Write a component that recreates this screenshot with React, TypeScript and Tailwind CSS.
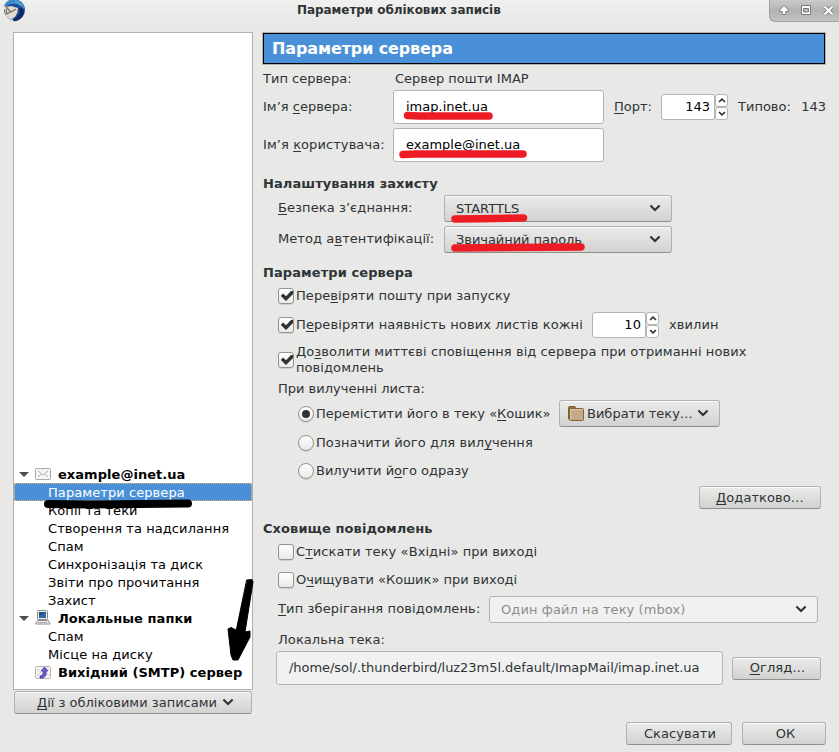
import type { ReactNode } from "react";
import clsx from "clsx";

const BUTTON =
  "flex items-center rounded-[3px] border border-[#b1b1ad] border-b-[#8f8f8b] bg-gradient-to-b from-[#ebebea] to-[#d2d2d0] shadow-[inset_0_1px_0_#fbfbfb]";
const FIELD = "flex items-center rounded-[3px] border border-[#b4b4b0] bg-white text-black";

/** Underlined access key inside a label. */
function Key({ children }: { children: string }) {
  return <span className="underline decoration-1 underline-offset-2 [text-decoration-skip-ink:none]">{children}</span>;
}

function Chevron({ className }: { className?: string }) {
  return (
    <svg className={clsx("h-[8px] w-[12px] shrink-0", className)} viewBox="0 0 12 8" fill="none">
      <path d="M1.400 1.500 6 6l4.600-4.500" stroke="#2e3436" strokeWidth="2.1" />
    </svg>
  );
}

function Label({ children, className }: { children: ReactNode; className?: string }) {
  return <span className={clsx("whitespace-nowrap", className)}>{children}</span>;
}

function Heading({ children, className }: { children: ReactNode; className?: string }) {
  return <h2 className={clsx("h-4 whitespace-nowrap font-bold leading-4", className)}>{children}</h2>;
}

function Select({ children, className }: { children: ReactNode; className?: string }) {
  return (
    <div className={clsx(BUTTON, "h-[27px] justify-between pl-[11px] pr-[10px]", className)}>
      <Label>{children}</Label>
      <Chevron className="mb-[2px]" />
    </div>
  );
}

function Spin({ value, className }: { value: number; className?: string }) {
  return (
    <div className={clsx("flex h-[26px]", className)}>
      <div className={clsx(FIELD, "grow justify-end rounded-r-[2px] pr-[4px]")}>{value}</div>
      <div className="flex w-[13px] flex-col">
        {["M1 4 4 1.2 7 4", "M1 1 4 3.8 7 1"].map((d) => (
          <div key={d} className={clsx(FIELD, "h-[13px] justify-center")}>
            <svg className="h-[5px] w-[8px]" viewBox="0 0 8 5" fill="none">
              <path d={d} stroke="#2e3436" strokeWidth="1.7" />
            </svg>
          </div>
        ))}
      </div>
    </div>
  );
}

function Check({ checked = false }: { checked?: boolean }) {
  return (
    <span className="flex h-4 w-4 shrink-0 items-center justify-center rounded-[3px] border border-[#92928e] bg-gradient-to-b from-white to-[#e9e9e8] shadow-[0_1px_0_#d0d0ce]">
      {checked && (
        <svg className="h-[14px] w-[14px] shrink-0" viewBox="0 0 14 14">
          <path d="M1.800 7 4 4.600l3 2.700L12 2h2v3L7 12z" fill="#2e3436" />
        </svg>
      )}
    </span>
  );
}

function Radio({ checked = false }: { checked?: boolean }) {
  return (
    <span className="flex h-4 w-4 shrink-0 items-center justify-center rounded-full border border-[#92928e] bg-gradient-to-b from-white to-[#e9e9e8] shadow-[0_1px_0_#d0d0ce]">
      {checked && <span className="h-2 w-2 rounded-full bg-[#2e3436]" />}
    </span>
  );
}

function Thunderbird() {
  return (
    <svg className="h-[22px] w-[22px]" viewBox="0 0 22 22">
      <circle cx="11.500" cy="10" r="10.500" fill="#1c4f96" />
      <path d="M1 6C3 0 9-2 15 0c4 2 6 5 6 9-3-4-8-6-12-5-3 0-6 1-8 4z" fill="#3b8cc6" />
      <path d="M12 0c5 1 8 4 9 9-2-3-5-5-9-6z" fill="#559fce" />
      <path d="M16 8c2 4 0 8-5 11l-1 2c6 1 11-4 11-10-1-3-3-4-5-3z" fill="#12276a" />
      <path d="M0 6q5 1 8 0l7 2q0 5-3 9l-4 2-5-2-1-6z" fill="#e3dbd0" />
      <path d="m3 7 5 5 5-3M3 9l1 5 3-2" fill="none" stroke="#75665c" strokeWidth="1.1" />
      <path d="M4 16c2 3 4 4 6 4l-1-3z" fill="#d5d6d8" />
    </svg>
  );
}

function TitleBar() {
  return (
    <header className="flex h-[22px] w-full shrink-0 bg-gradient-to-b from-[#f0f0f0] to-[#e8e8e6]">
      <div className="w-[40px] shrink-0 pl-[3px]">
        <Thunderbird />
      </div>
      <h1 className="grow pl-[257px] text-[12px] font-bold leading-[20px] tracking-[-0.06px]">
        Параметри облікових записів
      </h1>
      <div className="flex h-[22px] w-[70px] shrink-0 items-center gap-[12px] rounded-bl-[6px] border-b border-l border-[#a2a2a0] bg-gradient-to-b from-[#cacac9] via-[#b3b3b1] to-[#c2c2c0] pb-[1px] pl-[9px]">
        <svg className="h-[10px] w-[10px] shrink-0" viewBox="0 0 10 10">
          <path d="M5 .500.500 5v1.300h2.700v3.200h3.600V6.300h2.700V5z" fill="#fff" stroke="#777" strokeWidth=".9" />
        </svg>
        <svg className="h-[10px] w-[10px] shrink-0" viewBox="0 0 10 10">
          <path d="M.5.5h9v9h-9z" fill="#fff" stroke="#777" />
          <path d="M2.5 3.5h5v3.500h-5z" fill="#b9b9b8" stroke="#777" />
        </svg>
        <svg className="h-[11px] w-[11px] shrink-0" viewBox="0 0 11 11">
          <path d="m1.500 1.500 8 8m0-8-8 8" stroke="#777" strokeWidth="3.800" />
          <path d="m1.500 1.500 8 8m0-8-8 8" stroke="#fff" strokeWidth="2.200" />
        </svg>
      </div>
    </header>
  );
}

function MailIcon() {
  return (
    <svg className="h-[12px] w-[16px]" viewBox="0 0 16 12" fill="none">
      <rect x=".5" y=".5" width="15" height="11" rx="1" fill="#f5f5f5" stroke="#a7a7a7" />
      <path d="m3 3 5 4 5-4M3 9l3-3m7 3-3-3" stroke="#b0b0b0" />
    </svg>
  );
}

function ComputerIcon() {
  return (
    <svg className="h-[16px] w-[16px]" viewBox="0 0 16 16">
      <rect x="2.5" y=".5" width="10" height="9" rx="1" fill="#eee" stroke="#8b8b87" />
      <path d="M4 2h7v6H4z" fill="#3465a4" />
      <path d="M4 2h7L4 6z" fill="#204a87" />
      <path d="M2.500 10.500h11l1.500 3.500H.5z" fill="#f3f3f2" stroke="#8b8b87" />
      <path d="M3 12.500h9" stroke="#aaa" />
    </svg>
  );
}

function OutgoingIcon() {
  return (
    <svg className="h-[13px] w-[16px]" viewBox="0 0 16 13">
      <rect x=".5" y=".5" width="15" height="12" rx="1" fill="#f5f5f5" stroke="#b5b5b5" />
      <path d="m2 3 4 3-4 4m12-7-3 3 3 4" fill="none" stroke="#ccc" />
      <path d="M9.500 1 6 5h2v3.500L5 10v2h3l3-2.500V5h2z" fill="#7158cf" stroke="#4327a0" strokeWidth=".7" />
    </svg>
  );
}

type Row = { text: string; icon?: ReactNode; open?: boolean; selected?: boolean };

const ROWS: Row[] = [
  { text: "example@inet.ua", icon: <MailIcon />, open: true },
  { text: "Параметри сервера", selected: true },
  { text: "Копії та теки" },
  { text: "Створення та надсилання" },
  { text: "Спам" },
  { text: "Синхронізація та диск" },
  { text: "Звіти про прочитання" },
  { text: "Захист" },
  { text: "Локальные папки", icon: <ComputerIcon />, open: true },
  { text: "Спам" },
  { text: "Місце на диску" },
  { text: "Вихідний (SMTP) сервер", icon: <OutgoingIcon /> },
];

function TreeRow({ text, icon, open, selected }: Row) {
  if (!icon) {
    return (
      <li
        className={clsx(
          "flex h-[18px] items-center whitespace-nowrap pl-[34px] pt-[2px]",
          selected && "bg-[#4a90d9] text-white outline-1 -outline-offset-1 outline-dotted outline-[#e0bd70]",
        )}
      >
        {text}
      </li>
    );
  }
  return (
    <li className="flex h-[18px] items-center whitespace-nowrap font-bold tracking-[0.04px]">
      <span className="flex w-[21px] shrink-0 pl-[5px]">
        {open && (
          <svg className="h-[5px] w-[10px]" viewBox="0 0 10 5">
            <path d="M0 0h10L5 5z" fill="#4c4c4c" />
          </svg>
        )}
      </span>
      <span className="w-[23px] shrink-0">{icon}</span>
      <span className="pt-[2px]">{text}</span>
    </li>
  );
}

function Sidebar() {
  return (
    <aside className="w-[240px] shrink-0">
      <ul className="flex h-[658px] flex-col justify-end border border-[#b0b0ae] bg-white pb-[8px] text-black">
        {ROWS.map((row, i) => (
          <TreeRow key={i} {...row} />
        ))}
      </ul>
      <div className={clsx(BUTTON, "mx-[1px] mt-[1px] h-[23px] gap-[5px] pl-[22px]")}>
        <Label className="tracking-normal">
          <Key>Д</Key>ії з обліковими записами
        </Label>
        <Chevron className="mb-[2px]" />
      </div>
    </aside>
  );
}

function FolderIcon() {
  return (
    <svg className="h-[15px] w-[16px] shrink-0" viewBox="0 0 16 15">
      <path d="M.5 13V1.500q0-1 1-1h5q1 0 1 1V3H15v10z" fill="#8f7048" stroke="#7d5a2a" />
      <rect x="1.500" y="2.500" width="14" height="12" rx="1" fill="#c1ab8c" stroke="#8a6126" />
      <path d="M2.500 13.500v-10h12" fill="none" stroke="#d8c8b0" />
    </svg>
  );
}

function ServerSettings() {
  return (
    <main className="ml-[10px] w-[563px] shrink-0">
      <div className="mb-[1px] mt-[1px] flex h-[31px] w-[562px] items-center border border-black bg-[#4a90d9] pl-[8px] text-[16px] font-bold tracking-[-0.12px] text-white shadow-[0_0_0_1px_#b5b2ab]">
        Параметри сервера
      </div>
      <div className="flex h-[25px] items-center pt-[2px] tracking-normal">
        <Label className="w-[132px]">Тип сервера:</Label>
        <Label>Сервер пошти IMAP</Label>
      </div>
      <div className="flex h-[34px] items-center tracking-normal">
        <Label className="w-[130px] shrink-0">
          Ім’я <Key>с</Key>ервера:
        </Label>
        <div className={clsx(FIELD, "h-[34px] w-[211px] shrink-0 pl-[12px]")}>imap.inet.ua</div>
        <Label className="ml-[10px] w-[47px] shrink-0">
          <Key>П</Key>орт:
        </Label>
        <Spin value={143} className="w-[67px] shrink-0 leading-[18px]" />
        <Label className="ml-[10px]">Типово:</Label>
        <Label className="ml-auto">143</Label>
      </div>
      <div className="mt-[4px] flex h-[34px] items-center">
        <Label className="w-[130px] shrink-0">
          Ім’я <Key>к</Key>ористувача:
        </Label>
        <div className={clsx(FIELD, "h-[34px] w-[211px] pl-[12px] tracking-normal")}>example@inet.ua</div>
      </div>

      <Heading className="mt-[14px]">Налаштування захисту</Heading>
      <div className="mt-[3px] flex h-[27px] items-center pl-[15px]">
        <Label className="w-[166px] shrink-0 pb-[1px]">
          <Key>Б</Key>езпека з’єднання:
        </Label>
        <Select className="w-[228px] tracking-normal">STARTTLS</Select>
      </div>
      <div className="mt-[4px] flex h-[27px] items-center pl-[15px]">
        <Label className="w-[166px] shrink-0 pb-[1px]">
          Метод а<Key>в</Key>тентифікації:
        </Label>
        <Select className="w-[228px] tracking-[-0.05px]">Звичайний пароль</Select>
      </div>

      <Heading className="mt-[12px]">Параметри сервера</Heading>
      <div className="pl-[15px]">
        <div className="mt-[7px] flex h-4 items-center gap-[2px]">
          <Check checked />
          <Label>
            Пере<Key>в</Key>іряти пошту при запуску
          </Label>
        </div>
        <div className="mt-[8px] flex h-[26px] items-center gap-[2px]">
          <Check checked />
          <Label className="w-[294px] shrink-0 tracking-[0.1px]">
            П<Key>е</Key>ревіряти наявність нових листів кожні
          </Label>
          <Spin value={10} className="w-[67px]" />
          <Label className="ml-[8px]">хвилин</Label>
        </div>
        <div className="mt-[6px] flex h-[32px] items-center gap-[2px]">
          <Check checked />
          <Label className="leading-4">
            До<Key>з</Key>волити миттєві сповіщення від сервера при отриманні нових
            <br />
            повідомлень
          </Label>
        </div>
        <div className="mt-[5px] flex h-4 items-center tracking-normal">
          <Label>При вилученні листа:</Label>
        </div>
        <div className="pl-[20px]">
          <div className="mt-[3px] flex h-[27px] items-center gap-[2px] tracking-normal">
            <Radio checked />
            <Label className="w-[241px] shrink-0">
              Перемістити його в теку «<Key>К</Key>ошик»
            </Label>
            <div className={clsx(BUTTON, "h-[27px] w-[161px] pl-[8px]")}>
              <FolderIcon />
              <Label className="ml-[3px] mr-[4px]">Вибрати теку…</Label>
              <Chevron className="mb-[2px]" />
            </div>
          </div>
          <div className="mt-[8px] flex h-4 items-center gap-[2px]">
            <Radio />
            <Label>
              Позначити його для вил<Key>у</Key>чення
            </Label>
          </div>
          <div className="mt-[12px] flex h-4 items-center gap-[2px] tracking-normal">
            <Radio />
            <Label>
              Вилучити й<Key>о</Key>го одразу
            </Label>
          </div>
        </div>
      </div>
      <div className="mt-[7px] flex h-[24px] justify-end pr-[5px]">
        <div className={clsx(BUTTON, "h-[23px] w-[122px] justify-center")}>
          <Label>
            <Key>Д</Key>одатково…
          </Label>
        </div>
      </div>

      <Heading className="mt-[11px]">Сховище повідомлень</Heading>
      <div className="pl-[15px]">
        <div className="mt-[7px] flex h-4 items-center gap-[2px]">
          <Check />
          <Label>
            С<Key>т</Key>искати теку «Вхідні» при виході
          </Label>
        </div>
        <div className="mt-[12px] flex h-4 items-center gap-[2px] tracking-normal">
          <Check />
          <Label>
            О<Key>ч</Key>ищувати «Кошик» при виході
          </Label>
        </div>
        <div className="mt-[8px] flex h-[27px] items-center">
          <Label className="w-[211px] shrink-0 pb-[1px] tracking-[0.13px]">
            <Key>Т</Key>ип зберігання повідомлень:
          </Label>
          <div className="flex h-[27px] w-[329px] items-center justify-between rounded-[3px] border border-[#b4b4b0] bg-[#f1f1f1] pl-[11px] pr-[10px] text-[#8b8e8f]">
            <Label>Один файл на теку (mbox)</Label>
            <Chevron className="mb-[2px]" />
          </div>
        </div>
        <div className="mt-[9px] flex h-4 items-center">
          <Label>Локальна тека:</Label>
        </div>
      </div>
      <div className="mt-[3px] flex h-[34px] items-center pl-[13px]">
        <div className="flex h-[34px] w-[447px] shrink-0 items-center rounded-[3px] border border-[#b4b4b0] bg-[#f1f1f1] pl-[12px]">
          <Label className="tracking-[-0.04px]">/home/sol/.thunderbird/luz23m5l.default/ImapMail/imap.inet.ua</Label>
        </div>
        <div className={clsx(BUTTON, "ml-[9px] h-[23px] w-[89px] justify-center pl-[2px]")}>
          <Label>
            <Key>О</Key>гляд…
          </Label>
        </div>
      </div>
      <div className="mt-[37px] flex justify-end gap-[10px]">
        <div className={clsx(BUTTON, "h-[23px] w-[106px] justify-center pl-[2px]")}>Скасувати</div>
        <div className={clsx(BUTTON, "h-[23px] w-[84px] justify-center pl-[3px]")}>ОК</div>
      </div>
    </main>
  );
}

/** Pen marks scribbled over the dialog. */
function Annotations() {
  return (
    <svg className="pointer-events-none absolute inset-0" width="839" height="752" fill="none" strokeLinecap="round">
      <g stroke="#ed1c24" strokeWidth="7.5">
        <path d="M407.5 115.5 419 116h70" />
        <path d="M403 154.5 416 154h107" />
        <path d="M455 219 480 218.800 523.500 218" />
        <path d="M455 248 480 247.700 581 247" />
      </g>
      <path d="M48 504 90 504.500 188 503.500" stroke="#000" strokeWidth="8" />
      <path
        d="M247 580 252 579.500 253 582 245 632 250 631 250 637 238 660 233 660 231 655 228 629 231 627.500 236 630z"
        fill="#000"
        stroke="#000"
        strokeWidth="1"
        strokeLinejoin="round"
      />
    </svg>
  );
}

export default function App() {
  return (
    <div className="relative flex h-[752px] w-[839px] flex-col overflow-hidden bg-[#e8e8e6] font-['DejaVu_Sans',sans-serif] text-[13px] leading-4 tracking-[0.08px] text-[#2e3436]">
      <TitleBar />
      <div className="flex pl-[13px] pt-[10px]">
        <Sidebar />
        <ServerSettings />
      </div>
      <Annotations />
    </div>
  );
}
